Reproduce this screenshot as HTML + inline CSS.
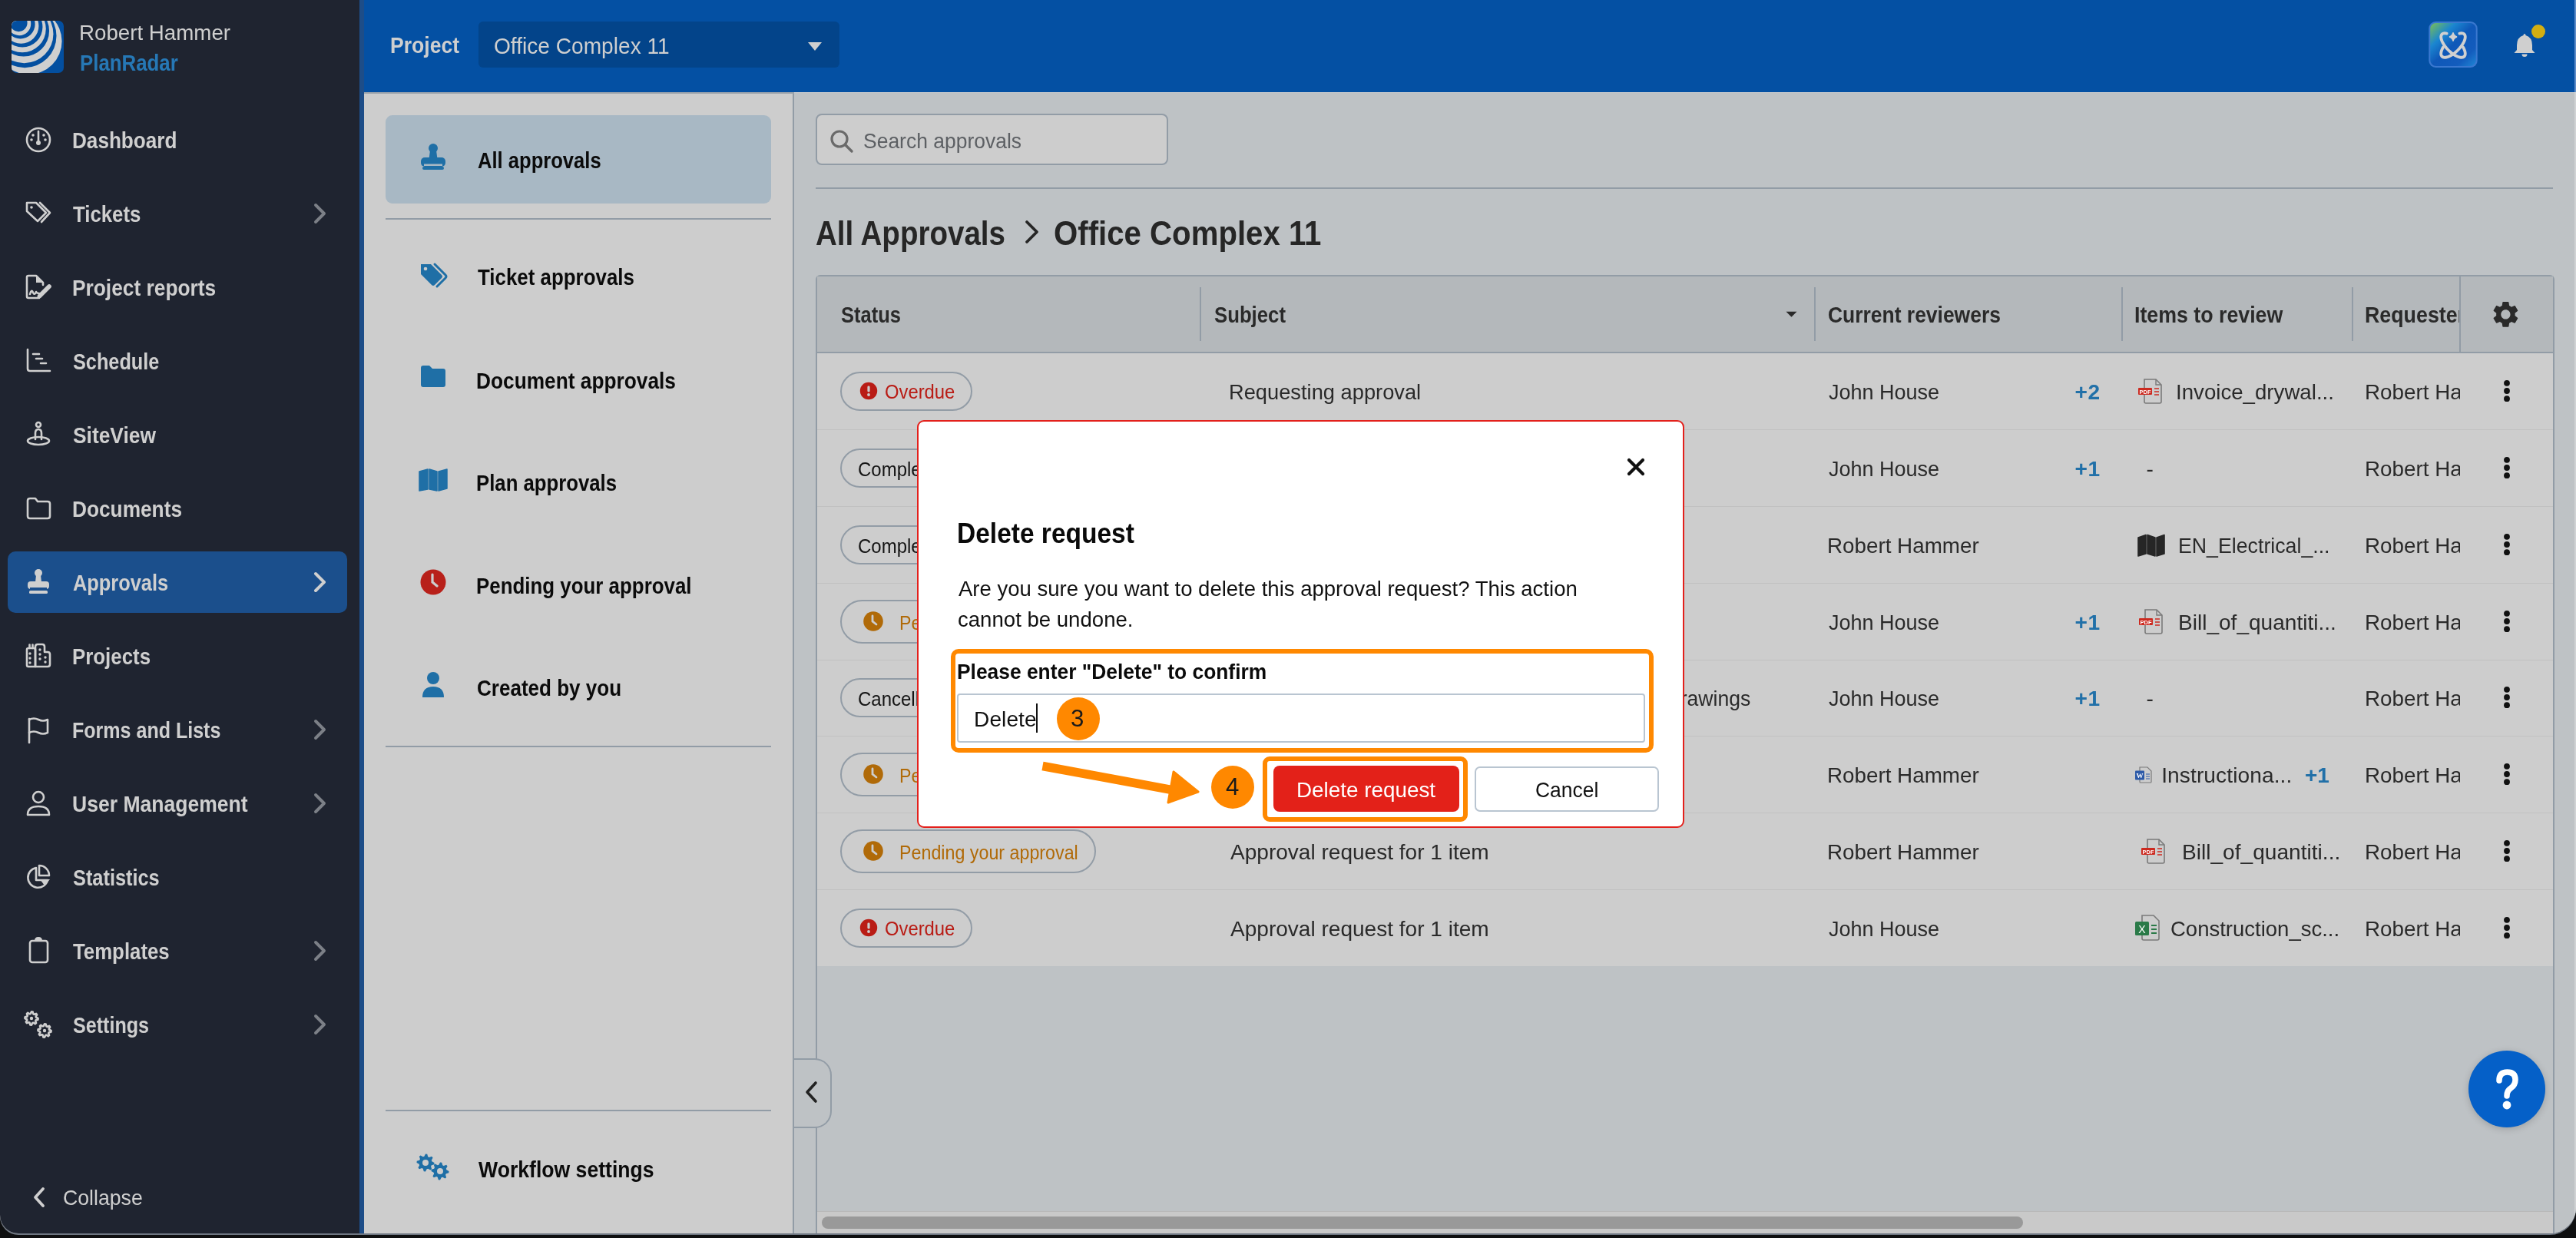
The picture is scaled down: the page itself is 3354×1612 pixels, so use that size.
<!DOCTYPE html>
<html><head><meta charset="utf-8"><title>PlanRadar - Approvals</title>
<style>
html,body{margin:0;padding:0;}
body{width:3354px;height:1612px;overflow:hidden;background:#0e0f10;font-family:"Liberation Sans", sans-serif;position:relative;}
svg{display:block;}
.w{will-change:transform;}
</style></head><body><div class="w" style="position:absolute;left:0;top:0;width:3354px;height:1612px;">
<div style="position:absolute;left:0;top:0;width:3354px;height:1606px;border-radius:0 0 34px 24px;overflow:hidden;background:#cdcdcd;box-shadow:0 2px 0 0 #6f7782">
<div style="position:absolute;left:0px;top:0px;width:468px;height:1607px;background:#1f2430;"></div>
<div style="position:absolute;left:468px;top:0px;width:6px;height:1607px;background:#1d4d88;"></div>
<div style="position:absolute;left:474px;top:0px;width:2880px;height:120px;background:#0450a3;"></div>
<div style="position:absolute;left:474px;top:120px;width:2880px;height:1px;background:#c9cbcd;"></div>
<div style="position:absolute;left:474px;top:121px;width:559px;height:1486px;background:#cdcdcd;"></div>
<div style="position:absolute;left:1032px;top:121px;width:2px;height:1486px;background:#929ca6;"></div>
<div style="position:absolute;left:474px;top:120px;width:560px;height:2px;background:#9aa3ab;"></div>
<div style="position:absolute;left:1034px;top:121px;width:2320px;height:1486px;background:#bec2c5;"></div>
<div style="position:absolute;left:3352px;top:120px;width:2px;height:1487px;background:#d0d2d4;"></div>
<div style="position:absolute;left:3352px;top:0px;width:2px;height:120px;background:#5f8cc8;"></div>
</div>
<svg style="position:absolute;left:15px;top:27px;" width="68" height="68" viewBox="0 0 68 68"><defs><clipPath id="lc"><rect x="0" y="0" width="68" height="68" rx="7"/></clipPath></defs><rect x="0" y="0" width="68" height="68" rx="7" fill="#034fa0"/><g clip-path="url(#lc)"><circle cx="22.39" cy="26.71" r="43.17" fill="#cfcfcf"/><circle cx="17.2" cy="19.87" r="41.29" fill="#034fa0"/><circle cx="16.51" cy="17.25" r="37.94" fill="#cfcfcf"/><circle cx="15.72" cy="13.23" r="33.32" fill="#034fa0"/><circle cx="14.01" cy="10.6" r="30.77" fill="#cfcfcf"/><circle cx="14.08" cy="8.09" r="26.39" fill="#034fa0"/><circle cx="12.43" cy="6.76" r="22.99" fill="#cfcfcf"/><circle cx="11.56" cy="4.44" r="19.07" fill="#034fa0"/><circle cx="10.07" cy="3.98" r="15.16" fill="#cfcfcf"/><circle cx="9.25" cy="2.87" r="11.32" fill="#034fa0"/></g></svg>
<div style="position:absolute;left:103.03px;top:28.90px;font-size:28.11px;line-height:28.11px;font-weight:400;color:#cfcfcf;white-space:nowrap;transform:scaleX(0.9854);transform-origin:0 0;">Robert Hammer</div>
<div style="position:absolute;left:104.11px;top:68.32px;font-size:29.15px;line-height:29.15px;font-weight:700;color:#2678b6;white-space:nowrap;transform:scaleX(0.8866);transform-origin:0 0;">PlanRadar</div>
<div style="position:absolute;left:10px;top:718px;width:442px;height:80px;background:#1b4f8c;border-radius:10px;"></div>
<div style="position:absolute;left:94.10px;top:169.32px;font-size:29.15px;line-height:29.15px;font-weight:700;color:#cfcfcf;white-space:nowrap;transform:scaleX(0.8962);transform-origin:0 0;">Dashboard</div>
<div style="position:absolute;left:95.00px;top:265.32px;font-size:29.15px;line-height:29.15px;font-weight:700;color:#cfcfcf;white-space:nowrap;transform:scaleX(0.8847);transform-origin:0 0;">Tickets</div>
<svg style="position:absolute;left:406px;top:264px;" width="22" height="28" viewBox="0 0 22 28"><path d="M5 3 L16 14 L5 25" fill="none" stroke="#7c8087" stroke-width="3.9" stroke-linecap="round" stroke-linejoin="round"/></svg>
<div style="position:absolute;left:94.10px;top:361.32px;font-size:29.15px;line-height:29.15px;font-weight:700;color:#cfcfcf;white-space:nowrap;transform:scaleX(0.9031);transform-origin:0 0;">Project reports</div>
<div style="position:absolute;left:95.00px;top:457.32px;font-size:29.15px;line-height:29.15px;font-weight:700;color:#cfcfcf;white-space:nowrap;transform:scaleX(0.8674);transform-origin:0 0;">Schedule</div>
<div style="position:absolute;left:95.00px;top:553.32px;font-size:29.15px;line-height:29.15px;font-weight:700;color:#cfcfcf;white-space:nowrap;transform:scaleX(0.9051);transform-origin:0 0;">SiteView</div>
<div style="position:absolute;left:94.10px;top:649.32px;font-size:29.15px;line-height:29.15px;font-weight:700;color:#cfcfcf;white-space:nowrap;transform:scaleX(0.9011);transform-origin:0 0;">Documents</div>
<div style="position:absolute;left:95.00px;top:745.32px;font-size:29.15px;line-height:29.15px;font-weight:700;color:#cfcfcf;white-space:nowrap;transform:scaleX(0.8707);transform-origin:0 0;">Approvals</div>
<svg style="position:absolute;left:406px;top:744px;" width="22" height="28" viewBox="0 0 22 28"><path d="M5 3 L16 14 L5 25" fill="none" stroke="#cfcfcf" stroke-width="3.9" stroke-linecap="round" stroke-linejoin="round"/></svg>
<div style="position:absolute;left:94.11px;top:841.32px;font-size:29.15px;line-height:29.15px;font-weight:700;color:#cfcfcf;white-space:nowrap;transform:scaleX(0.8876);transform-origin:0 0;">Projects</div>
<div style="position:absolute;left:94.14px;top:937.32px;font-size:29.15px;line-height:29.15px;font-weight:700;color:#cfcfcf;white-space:nowrap;transform:scaleX(0.8590);transform-origin:0 0;">Forms and Lists</div>
<svg style="position:absolute;left:406px;top:936px;" width="22" height="28" viewBox="0 0 22 28"><path d="M5 3 L16 14 L5 25" fill="none" stroke="#7c8087" stroke-width="3.9" stroke-linecap="round" stroke-linejoin="round"/></svg>
<div style="position:absolute;left:94.09px;top:1033.32px;font-size:29.15px;line-height:29.15px;font-weight:700;color:#cfcfcf;white-space:nowrap;transform:scaleX(0.9109);transform-origin:0 0;">User Management</div>
<svg style="position:absolute;left:406px;top:1032px;" width="22" height="28" viewBox="0 0 22 28"><path d="M5 3 L16 14 L5 25" fill="none" stroke="#7c8087" stroke-width="3.9" stroke-linecap="round" stroke-linejoin="round"/></svg>
<div style="position:absolute;left:95.00px;top:1129.32px;font-size:29.15px;line-height:29.15px;font-weight:700;color:#cfcfcf;white-space:nowrap;transform:scaleX(0.8697);transform-origin:0 0;">Statistics</div>
<div style="position:absolute;left:95.00px;top:1225.32px;font-size:29.15px;line-height:29.15px;font-weight:700;color:#cfcfcf;white-space:nowrap;transform:scaleX(0.8852);transform-origin:0 0;">Templates</div>
<svg style="position:absolute;left:406px;top:1224px;" width="22" height="28" viewBox="0 0 22 28"><path d="M5 3 L16 14 L5 25" fill="none" stroke="#7c8087" stroke-width="3.9" stroke-linecap="round" stroke-linejoin="round"/></svg>
<div style="position:absolute;left:95.00px;top:1321.32px;font-size:29.15px;line-height:29.15px;font-weight:700;color:#cfcfcf;white-space:nowrap;transform:scaleX(0.8619);transform-origin:0 0;">Settings</div>
<svg style="position:absolute;left:406px;top:1320px;" width="22" height="28" viewBox="0 0 22 28"><path d="M5 3 L16 14 L5 25" fill="none" stroke="#7c8087" stroke-width="3.9" stroke-linecap="round" stroke-linejoin="round"/></svg>
<svg style="position:absolute;left:30px;top:162px;" width="40" height="40" viewBox="0 0 40 40"><circle cx="20" cy="20" r="15" fill="none" stroke="#cfcfcf" stroke-width="2.6" stroke-linecap="round" stroke-linejoin="round"/><path d="M20 9 V22" fill="none" stroke="#cfcfcf" stroke-width="2.6" stroke-linecap="round" stroke-linejoin="round"/><circle cx="20" cy="24" r="3" fill="#cfcfcf"/><circle cx="13" cy="14" r="1.8" fill="#cfcfcf"/><circle cx="27" cy="14" r="1.8" fill="#cfcfcf"/><circle cx="11" cy="20" r="1.8" fill="#cfcfcf"/><circle cx="29" cy="20" r="1.8" fill="#cfcfcf"/></svg>
<svg style="position:absolute;left:30px;top:258px;" width="40" height="40" viewBox="0 0 40 40"><path d="M5 6 H17 L30 19 L19 30 L5 17 Z" fill="none" stroke="#cfcfcf" stroke-width="2.6" stroke-linecap="round" stroke-linejoin="round"/><circle cx="11" cy="12" r="1.8" fill="#cfcfcf"/><path d="M22 6 L35 19 L24 31" fill="none" stroke="#cfcfcf" stroke-width="2.6" stroke-linecap="round" stroke-linejoin="round"/></svg>
<svg style="position:absolute;left:30px;top:354px;" width="40" height="40" viewBox="0 0 40 40"><path d="M21 34 H7 Q5 34 5 32 V7 Q5 5 7 5 H17 L26 14 V17" fill="none" stroke="#cfcfcf" stroke-width="2.6" stroke-linecap="round" stroke-linejoin="round"/><path d="M17 4 V14 H27 Z" fill="#cfcfcf"/><path d="M9 29 Q11 22 13 27 Q15 31 17 26 Q18 28 21 28" fill="none" stroke="#cfcfcf" stroke-width="2.6" stroke-linecap="round" stroke-linejoin="round" stroke-width="1.8"/><path d="M19 30 L32 17 Q34 15 36 17 Q38 19 36 21 L23 34 L18 35 Z" fill="#cfcfcf"/></svg>
<svg style="position:absolute;left:30px;top:450px;" width="40" height="40" viewBox="0 0 40 40"><path d="M6 5 V30 Q6 33 9 33 H35" fill="none" stroke="#cfcfcf" stroke-width="2.6" stroke-linecap="round" stroke-linejoin="round"/><path d="M13 11 H21 M17 17 H25 M23 23 H30" fill="none" stroke="#cfcfcf" stroke-width="2.6" stroke-linecap="round" stroke-linejoin="round" stroke-width="3"/></svg>
<svg style="position:absolute;left:30px;top:546px;" width="40" height="40" viewBox="0 0 40 40"><circle cx="20" cy="7" r="3" fill="none" stroke="#cfcfcf" stroke-width="2.6" stroke-linecap="round" stroke-linejoin="round"/><path d="M16 26 V18 Q16 13 20 13 Q24 13 24 18 V26" fill="none" stroke="#cfcfcf" stroke-width="2.6" stroke-linecap="round" stroke-linejoin="round"/><ellipse cx="20" cy="28" rx="14" ry="5" fill="none" stroke="#cfcfcf" stroke-width="2.6" stroke-linecap="round" stroke-linejoin="round"/></svg>
<svg style="position:absolute;left:30px;top:642px;" width="40" height="40" viewBox="0 0 40 40"><path d="M6 10 Q6 7 9 7 H16 L19 11 H32 Q35 11 35 14 V30 Q35 33 32 33 H9 Q6 33 6 30 Z" fill="none" stroke="#cfcfcf" stroke-width="2.6" stroke-linecap="round" stroke-linejoin="round"/></svg>
<svg style="position:absolute;left:30px;top:738px;" width="40" height="40" viewBox="0 0 40 40"><circle cx="20" cy="8" r="5" fill="#cfcfcf"/><path d="M17 11 H23 L24 20 H16 Z" fill="#cfcfcf"/><rect x="6" y="19" width="28" height="10" rx="4" fill="#cfcfcf"/><rect x="8" y="31" width="24" height="4" rx="1.5" fill="#cfcfcf"/><rect x="9" y="27" width="22" height="2" fill="#1b4f8c"/></svg>
<svg style="position:absolute;left:30px;top:834px;" width="40" height="40" viewBox="0 0 40 40"><path d="M5 12 Q5 10 7 10 H14 Q16 10 16 12 V34 H7 Q5 34 5 32 Z" fill="none" stroke="#cfcfcf" stroke-width="2.6" stroke-linecap="round" stroke-linejoin="round"/><path d="M8.5 10 V5.5 M12.5 10 V5.5" fill="none" stroke="#cfcfcf" stroke-width="2.6" stroke-linecap="round" stroke-linejoin="round"/><path d="M16 34 V8 Q16 5 19 5 H25 Q28 5 28 8 V15 H32 Q35 15 35 18 V31 Q35 34 32 34 Z" fill="none" stroke="#cfcfcf" stroke-width="2.6" stroke-linecap="round" stroke-linejoin="round"/><g fill="#cfcfcf"><circle cx="9" cy="17" r="1.7"/><circle cx="9" cy="23" r="1.7"/><circle cx="9" cy="29" r="1.7"/><circle cx="22" cy="12" r="1.7"/><circle cx="22" cy="18" r="1.7"/><circle cx="22" cy="24" r="1.7"/><circle cx="29" cy="22" r="1.7"/><circle cx="29" cy="28" r="1.7"/></g></svg>
<svg style="position:absolute;left:30px;top:930px;" width="40" height="40" viewBox="0 0 40 40"><path d="M8 37 V6" fill="none" stroke="#cfcfcf" stroke-width="2.6" stroke-linecap="round" stroke-linejoin="round"/><path d="M8 7 Q14 4 20 7 Q26 10 32 7 V24 Q26 27 20 24 Q14 21 8 24" fill="none" stroke="#cfcfcf" stroke-width="2.6" stroke-linecap="round" stroke-linejoin="round"/></svg>
<svg style="position:absolute;left:30px;top:1026px;" width="40" height="40" viewBox="0 0 40 40"><circle cx="20" cy="12" r="7" fill="none" stroke="#cfcfcf" stroke-width="2.6" stroke-linecap="round" stroke-linejoin="round"/><path d="M6 35 Q6 24 20 24 Q34 24 34 35 Z" fill="none" stroke="#cfcfcf" stroke-width="2.6" stroke-linecap="round" stroke-linejoin="round"/></svg>
<svg style="position:absolute;left:30px;top:1122px;" width="40" height="40" viewBox="0 0 40 40"><path d="M17 8 A13 13 0 1 0 32 24 L17 24 Z" fill="none" stroke="#cfcfcf" stroke-width="2.6" stroke-linecap="round" stroke-linejoin="round"/><path d="M21 5 A13 13 0 0 1 34 18 H21 Z" fill="none" stroke="#cfcfcf" stroke-width="2.6" stroke-linecap="round" stroke-linejoin="round"/><path d="M22 23 H35 L28 31 Z" fill="#cfcfcf"/></svg>
<svg style="position:absolute;left:30px;top:1218px;" width="40" height="40" viewBox="0 0 40 40"><rect x="9" y="7" width="23" height="28" rx="3" fill="none" stroke="#cfcfcf" stroke-width="2.6" stroke-linecap="round" stroke-linejoin="round"/><path d="M16 7 Q16 3 20 3 Q24 3 24 7" fill="#cfcfcf" stroke="#cfcfcf" stroke-width="2"/></svg>
<svg style="position:absolute;left:30px;top:1314px;" width="40" height="40" viewBox="0 0 40 40"><path d="M19.60,12.00 L19.43,13.68 L16.73,14.37 L16.16,15.44 L17.08,18.08 L15.78,19.15 L13.37,17.73 L12.21,18.08 L11.00,20.60 L9.32,20.43 L8.63,17.73 L7.56,17.16 L4.92,18.08 L3.85,16.78 L5.27,14.37 L4.92,13.21 L2.40,12.00 L2.57,10.32 L5.27,9.63 L5.84,8.56 L4.92,5.92 L6.22,4.85 L8.63,6.27 L9.79,5.92 L11.00,3.40 L12.68,3.57 L13.37,6.27 L14.44,6.84 L17.08,5.92 L18.15,7.22 L16.73,9.63 L17.08,10.79 Z" fill="none" stroke="#cfcfcf" stroke-width="2.6" stroke-linecap="round" stroke-linejoin="round" stroke-width="2.1"/><circle cx="11" cy="12" r="2.2" fill="#cfcfcf"/><path d="M36.60,28.00 L36.43,29.68 L33.73,30.37 L33.16,31.44 L34.08,34.08 L32.78,35.15 L30.37,33.73 L29.21,34.08 L28.00,36.60 L26.32,36.43 L25.63,33.73 L24.56,33.16 L21.92,34.08 L20.85,32.78 L22.27,30.37 L21.92,29.21 L19.40,28.00 L19.57,26.32 L22.27,25.63 L22.84,24.56 L21.92,21.92 L23.22,20.85 L25.63,22.27 L26.79,21.92 L28.00,19.40 L29.68,19.57 L30.37,22.27 L31.44,22.84 L34.08,21.92 L35.15,23.22 L33.73,25.63 L34.08,26.79 Z" fill="none" stroke="#cfcfcf" stroke-width="2.6" stroke-linecap="round" stroke-linejoin="round" stroke-width="2.1"/><circle cx="28" cy="28" r="2.2" fill="#cfcfcf"/></svg>
<svg style="position:absolute;left:38px;top:1544px;" width="24" height="30" viewBox="0 0 24 30"><path d="M18 4 L8 15 L18 26" fill="none" stroke="#cfcfcf" stroke-width="3.8" stroke-linecap="round" stroke-linejoin="round"/></svg>
<div style="position:absolute;left:82.05px;top:1546.20px;font-size:28.11px;line-height:28.11px;font-weight:400;color:#cfcfcf;white-space:nowrap;transform:scaleX(0.9485);transform-origin:0 0;">Collapse</div>
<div style="position:absolute;left:507.54px;top:44.44px;font-size:30.19px;line-height:30.19px;font-weight:700;color:#cfcfcf;white-space:nowrap;transform:scaleX(0.8795);transform-origin:0 0;">Project</div>
<div style="position:absolute;left:623px;top:28px;width:470px;height:60px;background:#03448a;border-radius:6px;"></div>
<div style="position:absolute;left:643.02px;top:45.56px;font-size:28.63px;line-height:28.63px;font-weight:400;color:#cfcfcf;white-space:nowrap;transform:scaleX(0.9823);transform-origin:0 0;">Office Complex 11</div>
<svg style="position:absolute;left:1050px;top:54px;" width="22" height="14" viewBox="0 0 22 14"><path d="M2 1 H20 L11 12 Z" fill="#cfcfcf"/></svg>
<svg style="position:absolute;left:3162px;top:28px;" width="64" height="60" viewBox="0 0 64 60"><defs><linearGradient id="aig" x1="0" y1="0" x2="1" y2="1">
<stop offset="0" stop-color="#7abf55"/><stop offset="0.28" stop-color="#1b86d0"/><stop offset="0.5" stop-color="#0f58b8"/><stop offset="0.78" stop-color="#135cbd"/><stop offset="1" stop-color="#1f86d4"/></linearGradient></defs>
<rect x="0.3" y="0" width="63.4" height="60" rx="9" fill="#3a78d0"/>
<rect x="2.3" y="2" width="59.4" height="56" rx="7.5" fill="url(#aig)"/>
<g fill="none" stroke="#d0d0d0" stroke-width="3.8" stroke-linecap="round">
<path d="M44.96,33.40 L45.79,34.94 L46.48,36.43 L47.03,37.87 L47.43,39.25 L47.68,40.54 L47.77,41.74 L47.71,42.83 L47.50,43.81 L47.13,44.66 L46.62,45.37 L45.95,45.94 L45.16,46.37 L44.23,46.65 L43.18,46.77 L42.02,46.73 L40.77,46.55 L39.43,46.20 L38.01,45.71 L36.53,45.08 L35.01,44.30 L33.47,43.40 L31.90,42.37 L30.34,41.23 L28.79,39.99 L27.28,38.66 L25.81,37.25 L24.40,35.79 L23.07,34.28 L21.82,32.73 L20.68,31.17 L19.65,29.60 L18.74,28.05 L17.95,26.53 L17.31,25.05 L16.81,23.64 L16.47,22.29 L16.27,21.03 L16.23,19.87 L16.34,18.81 L16.61,17.88 L17.03,17.08 L17.60,16.41 L18.31,15.89 L19.15,15.51 L20.13,15.29 L21.21,15.23 L22.41,15.31 L23.69,15.56"/><path d="M40.31,15.56 L41.59,15.31 L42.79,15.23 L43.87,15.29 L44.85,15.51 L45.69,15.89 L46.40,16.41 L46.97,17.08 L47.39,17.88 L47.66,18.81 L47.77,19.87 L47.73,21.03 L47.53,22.29 L47.19,23.64 L46.69,25.05 L46.05,26.53 L45.26,28.05 L44.35,29.60 L43.32,31.17 L42.18,32.73 L40.93,34.28 L39.60,35.79 L38.19,37.25 L36.72,38.66 L35.21,39.99 L33.66,41.23 L32.10,42.37 L30.53,43.40 L28.99,44.30 L27.47,45.08 L25.99,45.71 L24.57,46.20 L23.23,46.55 L21.98,46.73 L20.82,46.77 L19.77,46.65 L18.84,46.37 L18.05,45.94 L17.38,45.37 L16.87,44.66 L16.50,43.81 L16.29,42.83 L16.23,41.74 L16.32,40.54 L16.57,39.25 L16.97,37.87 L17.52,36.43 L18.21,34.94 L19.04,33.40"/></g>
<path d="M32 14.5 Q33 19 37 20 Q33 21 32 25.5 Q31 21 27 20 Q31 19 32 14.5 Z" fill="#d0d0d0" stroke="#d0d0d0" stroke-width="1.5"/></svg>
<svg style="position:absolute;left:3262px;top:28px;" width="56" height="52" viewBox="0 0 56 52"><path d="M25 16 Q26.5 16 26.5 18 Q35 20.5 35 31 V37 L38.5 41 H11.5 L15 37 V31 Q15 20.5 23.5 18 Q23.5 16 25 16 Z" fill="#cfcfcf"/><path d="M21.5 42.5 H28.5 Q28.5 46 25 46 Q21.5 46 21.5 42.5 Z" fill="#cfcfcf"/><circle cx="43" cy="13" r="9" fill="#d2ae12"/></svg>
<div style="position:absolute;left:502px;top:150px;width:502px;height:115px;background:#a8b8c4;border-radius:9px;"></div>
<div style="position:absolute;left:502px;top:284px;width:502px;height:2px;background:#929ca6;"></div>
<div style="position:absolute;left:502px;top:971px;width:502px;height:2px;background:#929ca6;"></div>
<div style="position:absolute;left:502px;top:1445px;width:502px;height:2px;background:#929ca6;"></div>
<div style="position:absolute;left:622.00px;top:193.94px;font-size:30.19px;line-height:30.19px;font-weight:700;color:#0b0b0b;white-space:nowrap;transform:scaleX(0.8475);transform-origin:0 0;">All approvals</div>
<div style="position:absolute;left:622.00px;top:346.44px;font-size:30.19px;line-height:30.19px;font-weight:700;color:#0b0b0b;white-space:nowrap;transform:scaleX(0.8577);transform-origin:0 0;">Ticket approvals</div>
<div style="position:absolute;left:620.26px;top:480.94px;font-size:30.19px;line-height:30.19px;font-weight:700;color:#0b0b0b;white-space:nowrap;transform:scaleX(0.8705);transform-origin:0 0;">Document approvals</div>
<div style="position:absolute;left:620.29px;top:614.44px;font-size:30.19px;line-height:30.19px;font-weight:700;color:#0b0b0b;white-space:nowrap;transform:scaleX(0.8525);transform-origin:0 0;">Plan approvals</div>
<div style="position:absolute;left:620.28px;top:748.14px;font-size:30.19px;line-height:30.19px;font-weight:700;color:#0b0b0b;white-space:nowrap;transform:scaleX(0.8576);transform-origin:0 0;">Pending your approval</div>
<div style="position:absolute;left:621.14px;top:881.14px;font-size:30.19px;line-height:30.19px;font-weight:700;color:#0b0b0b;white-space:nowrap;transform:scaleX(0.8626);transform-origin:0 0;">Created by you</div>
<div style="position:absolute;left:622.50px;top:1508.44px;font-size:30.19px;line-height:30.19px;font-weight:700;color:#0b0b0b;white-space:nowrap;transform:scaleX(0.8812);transform-origin:0 0;">Workflow settings</div>
<svg style="position:absolute;left:546px;top:186px;" width="36" height="38" viewBox="0 0 36 38"><circle cx="18" cy="7" r="6" fill="#1f6fa6"/><path d="M14 10 H22 L23.5 21 H12.5 Z" fill="#1f6fa6"/><rect x="2" y="19" width="32" height="12" rx="5" fill="#1f6fa6"/><rect x="4" y="31" width="28" height="4" rx="2" fill="#1f6fa6"/><rect x="6" y="27.5" width="24" height="2.5" fill="#a8b8c4"/></svg>
<svg style="position:absolute;left:544px;top:340px;" width="40" height="40" viewBox="0 0 40 40"><path d="M4 4 H17 L31 18 Q33 20 31 22 L22 31 Q20 33 18 31 L4 17 Z" fill="#1f6fa6"/><circle cx="10" cy="10" r="2.3" fill="#cdcdcd"/><path d="M22 4 L36 18 Q38 20 36 22 L25 33" fill="none" stroke="#1f6fa6" stroke-width="3" stroke-linecap="round"/></svg>
<svg style="position:absolute;left:546px;top:474px;" width="36" height="32" viewBox="0 0 36 32"><path d="M2 5 Q2 2 5 2 H13 L17 6 H31 Q34 6 34 9 V27 Q34 30 31 30 H5 Q2 30 2 27 Z" fill="#1f6fa6"/></svg>
<svg style="position:absolute;left:544px;top:609px;" width="40" height="32" viewBox="0 0 40 32"><path d="M2 5 L13 2 V28 L2 30 Z M15 2 L25 5 V30 L15 28 Z M27 5 L38 2 V27 L27 30 Z" fill="#1f6fa6" stroke="#1f6fa6" stroke-width="1.5" stroke-linejoin="round"/></svg>
<svg style="position:absolute;left:546px;top:740px;" width="36" height="36" viewBox="0 0 36 36"><circle cx="18" cy="18" r="16.5" fill="#b8201a"/><path d="M17 8 V18 L23 23" fill="none" stroke="#cdcdcd" stroke-width="3.2" stroke-linecap="round"/></svg>
<svg style="position:absolute;left:548px;top:874px;" width="32" height="36" viewBox="0 0 32 36"><circle cx="16" cy="9" r="8" fill="#1f6fa6"/><path d="M2 34 Q2 20 16 20 Q30 20 30 34 Z" fill="#1f6fa6"/></svg>
<svg style="position:absolute;left:540px;top:1500px;" width="46" height="40" viewBox="0 0 46 40"><path d="M25.50,14.00 L25.28,16.24 L21.85,17.25 L21.07,18.72 L22.13,22.13 L20.39,23.56 L17.25,21.85 L15.66,22.34 L14.00,25.50 L11.76,25.28 L10.75,21.85 L9.28,21.07 L5.87,22.13 L4.44,20.39 L6.15,17.25 L5.66,15.66 L2.50,14.00 L2.72,11.76 L6.15,10.75 L6.93,9.28 L5.87,5.87 L7.61,4.44 L10.75,6.15 L12.34,5.66 L14.00,2.50 L16.24,2.72 L17.25,6.15 L18.72,6.93 L22.13,5.87 L23.56,7.61 L21.85,10.75 L22.34,12.34 Z" fill="#1f6fa6"/><circle cx="14" cy="14" r="4" fill="#cdcdcd"/><path d="M44.50,25.00 L44.28,27.24 L40.85,28.25 L40.07,29.72 L41.13,33.13 L39.39,34.56 L36.25,32.85 L34.66,33.34 L33.00,36.50 L30.76,36.28 L29.75,32.85 L28.28,32.07 L24.87,33.13 L23.44,31.39 L25.15,28.25 L24.66,26.66 L21.50,25.00 L21.72,22.76 L25.15,21.75 L25.93,20.28 L24.87,16.87 L26.61,15.44 L29.75,17.15 L31.34,16.66 L33.00,13.50 L35.24,13.72 L36.25,17.15 L37.72,17.93 L41.13,16.87 L42.56,18.61 L40.85,21.75 L41.34,23.34 Z" fill="#1f6fa6"/><circle cx="33" cy="25" r="4" fill="#cdcdcd"/></svg>
<div style="position:absolute;left:1062px;top:148px;width:455px;height:63px;background:#cdcdcd;border:2px solid #929ca6;border-radius:8px;"></div>
<svg style="position:absolute;left:1078px;top:166px;" width="36" height="36" viewBox="0 0 36 36"><circle cx="15" cy="15" r="10" fill="none" stroke="#6a6a6a" stroke-width="3.2"/><path d="M22.5 22.5 L31 31" stroke="#6a6a6a" stroke-width="3.4" stroke-linecap="round"/></svg>
<div style="position:absolute;left:1124.06px;top:170.00px;font-size:28.11px;line-height:28.11px;font-weight:400;color:#5d6064;white-space:nowrap;transform:scaleX(0.9417);transform-origin:0 0;">Search approvals</div>
<div style="position:absolute;left:1062px;top:244px;width:2262px;height:2px;background:#929ca6;"></div>
<div style="position:absolute;left:1061.73px;top:282.45px;font-size:44.24px;line-height:44.24px;font-weight:700;color:#262626;white-space:nowrap;transform:scaleX(0.8711);transform-origin:0 0;">All Approvals</div>
<svg style="position:absolute;left:1330px;top:284px;" width="28" height="36" viewBox="0 0 28 36"><path d="M7 5 L20 18 L7 31" fill="none" stroke="#262626" stroke-width="3.8" stroke-linecap="round" stroke-linejoin="round"/></svg>
<div style="position:absolute;left:1372.39px;top:282.45px;font-size:44.24px;line-height:44.24px;font-weight:700;color:#262626;white-space:nowrap;transform:scaleX(0.9086);transform-origin:0 0;">Office Complex 11</div>
<div style="position:absolute;left:1062px;top:358px;width:2260px;height:1246px;border:2px solid #929ca6;border-bottom:none;border-radius:6px 6px 0 0;background:#bec2c5;"></div>
<div style="position:absolute;left:1064px;top:360px;width:2260px;height:98px;background:#b4b8bb;"></div>
<div style="position:absolute;left:1064px;top:458px;width:2260px;height:2px;background:#929ca6;"></div>
<div style="position:absolute;left:1064px;top:460px;width:2260px;height:798px;background:#cdcdcd;"></div>
<div style="position:absolute;left:1064px;top:559px;width:2260px;height:1px;background:#c1c1c1;"></div>
<div style="position:absolute;left:1064px;top:659px;width:2260px;height:1px;background:#c1c1c1;"></div>
<div style="position:absolute;left:1064px;top:759px;width:2260px;height:1px;background:#c1c1c1;"></div>
<div style="position:absolute;left:1064px;top:859px;width:2260px;height:1px;background:#c1c1c1;"></div>
<div style="position:absolute;left:1064px;top:958px;width:2260px;height:1px;background:#c1c1c1;"></div>
<div style="position:absolute;left:1064px;top:1058px;width:2260px;height:1px;background:#c1c1c1;"></div>
<div style="position:absolute;left:1064px;top:1158px;width:2260px;height:1px;background:#c1c1c1;"></div>
<div style="position:absolute;left:1562px;top:374px;width:2px;height:70px;background:#929ca6;"></div>
<div style="position:absolute;left:2362px;top:374px;width:2px;height:70px;background:#929ca6;"></div>
<div style="position:absolute;left:2762px;top:374px;width:2px;height:70px;background:#929ca6;"></div>
<div style="position:absolute;left:3062px;top:374px;width:2px;height:70px;background:#929ca6;"></div>
<div style="position:absolute;left:3202px;top:360px;width:2px;height:98px;background:#929ca6;"></div>
<div style="position:absolute;left:1094.60px;top:395.44px;font-size:30.19px;line-height:30.19px;font-weight:700;color:#2a2a2a;white-space:nowrap;transform:scaleX(0.8451);transform-origin:0 0;">Status</div>
<div style="position:absolute;left:1580.60px;top:395.44px;font-size:30.19px;line-height:30.19px;font-weight:700;color:#2a2a2a;white-space:nowrap;transform:scaleX(0.8525);transform-origin:0 0;">Subject</div>
<svg style="position:absolute;left:2322px;top:402px;" width="22" height="14" viewBox="0 0 22 14"><path d="M3.5 3.8 H17.5 L10.5 10.8 Z" fill="#2a2a2a"/></svg>
<div style="position:absolute;left:2379.82px;top:395.44px;font-size:30.19px;line-height:30.19px;font-weight:700;color:#2a2a2a;white-space:nowrap;transform:scaleX(0.8760);transform-origin:0 0;">Current reviewers</div>
<div style="position:absolute;left:2779.23px;top:395.44px;font-size:30.19px;line-height:30.19px;font-weight:700;color:#2a2a2a;white-space:nowrap;transform:scaleX(0.8863);transform-origin:0 0;">Items to review</div>
<div style="position:absolute;left:3062px;top:380px;width:140px;height:60px;overflow:hidden;">
<div style="position:absolute;left:17.22px;top:15.44px;font-size:30.19px;line-height:30.19px;font-weight:700;color:#2a2a2a;white-space:nowrap;transform:scaleX(0.8876);transform-origin:0 0;">Requester</div>
</div>
<svg style="position:absolute;left:3241.6px;top:389.4px;" width="40.8" height="40.8" viewBox="0 0 24 24"><path d="M19.14 12.94c.04-.3.06-.61.06-.94 0-.32-.02-.64-.07-.94l2.03-1.58c.18-.14.23-.41.12-.61l-1.92-3.32c-.12-.22-.37-.29-.59-.22l-2.39.96c-.5-.38-1.03-.7-1.62-.94l-.36-2.54c-.04-.24-.24-.41-.48-.41h-3.84c-.24 0-.43.17-.47.41l-.36 2.54c-.59.24-1.13.57-1.62.94l-2.39-.96c-.22-.08-.47 0-.59.22L2.74 8.87c-.12.21-.08.47.12.61l2.03 1.58c-.05.3-.09.63-.09.94s.02.64.07.94l-2.03 1.58c-.18.14-.23.41-.12.61l1.92 3.320c.12.22.37.29.59.22l2.39-.96c.5.38 1.03.7 1.62.94l.36 2.54c.05.24.24.41.48.41h3.84c.24 0 .44-.17.47-.41l.36-2.54c.59-.24 1.13-.56 1.62-.94l2.39.96c.22.08.47 0 .59-.22l1.92-3.32c.12-.22.07-.47-.12-.61l-2.01-1.58zM12 15.6c-1.98 0-3.6-1.62-3.6-3.6s1.62-3.6 3.6-3.6 3.6 1.62 3.6 3.6-1.62 3.6-3.6 3.6z" fill="#2a2a2a" fill-rule="evenodd"/></svg>
<div style="position:absolute;left:1064px;top:1577px;width:2260px;height:1px;background:#b9b9b9;"></div>
<div style="position:absolute;left:1064px;top:1578px;width:2260px;height:28px;background:#c9c9c9;"></div>
<div style="position:absolute;left:1070px;top:1584px;width:1564px;height:16px;background:#999999;border-radius:8px;"></div>
<div style="position:absolute;left:1032px;top:1378px;width:49px;height:87px;background:#bec2c5;border:2px solid #929ca6;border-left:none;border-radius:0 22px 22px 0;"></div>
<svg style="position:absolute;left:1044px;top:1406px;" width="24" height="34" viewBox="0 0 24 34"><path d="M18 4 L7 16 L18 28" fill="none" stroke="#222" stroke-width="3.6" stroke-linecap="round" stroke-linejoin="round"/></svg>
<div style="position:absolute;left:1032px;top:1378px;width:2px;height:89px;background:#929ca6;"></div>
<div style="position:absolute;left:3214px;top:1368px;width:100px;height:100px;border-radius:50%;background:#0560c8;box-shadow:0 2px 10px rgba(0,0,0,0.18);"></div>
<svg style="position:absolute;left:3234px;top:1386px;" width="60" height="64" viewBox="0 0 60 64"><path d="M20 21 Q20 10 30.5 10 Q41 10 41 20 Q41 27 35 31 Q30 34 30 41" fill="none" stroke="#fff" stroke-width="7.5" stroke-linecap="round"/><circle cx="30" cy="53" r="5.4" fill="#fff"/></svg>
<div style="position:absolute;left:1094px;top:483.5px;width:168px;height:47px;border:2px solid #929ca6;border-radius:25.5px;"></div>
<svg style="position:absolute;left:1119px;top:497px;" width="24" height="24" viewBox="0 0 24 24"><circle cx="12" cy="12" r="11.2" fill="#b91c15"/><rect x="10.4" y="5.5" width="3.2" height="8" rx="1.4" fill="#cdcdcd"/><circle cx="12" cy="17" r="1.9" fill="#cdcdcd"/></svg>
<div style="position:absolute;left:1152.08px;top:497.47px;font-size:26.02px;line-height:26.02px;font-weight:400;color:#b91c15;white-space:nowrap;transform:scaleX(0.9154);transform-origin:0 0;">Overdue</div>
<div style="position:absolute;left:1094px;top:583.5px;width:166px;height:47px;border:2px solid #929ca6;border-radius:25.5px;"></div>
<div style="position:absolute;left:1116.58px;top:597.97px;font-size:26.02px;line-height:26.02px;font-weight:400;color:#141414;white-space:nowrap;transform:scaleX(0.9222);transform-origin:0 0;">Completed</div>
<div style="position:absolute;left:1094px;top:683.5px;width:166px;height:47px;border:2px solid #929ca6;border-radius:25.5px;"></div>
<div style="position:absolute;left:1116.58px;top:697.97px;font-size:26.02px;line-height:26.02px;font-weight:400;color:#141414;white-space:nowrap;transform:scaleX(0.9222);transform-origin:0 0;">Completed</div>
<div style="position:absolute;left:1094px;top:780.5px;width:329px;height:53px;border:2px solid #929ca6;border-radius:28.5px;"></div>
<svg style="position:absolute;left:1123px;top:795px;" width="28" height="28" viewBox="0 0 28 28"><circle cx="14" cy="14" r="12.8" fill="#b06a08"/><path d="M13 7 V14 L18 18" fill="none" stroke="#cdcdcd" stroke-width="2.8" stroke-linecap="round"/></svg>
<div style="position:absolute;left:1170.91px;top:797.97px;font-size:26.02px;line-height:26.02px;font-weight:400;color:#b06a08;white-space:nowrap;transform:scaleX(0.8942);transform-origin:0 0;">Pending your approval</div>
<div style="position:absolute;left:1094px;top:882.5px;width:166px;height:47px;border:2px solid #929ca6;border-radius:25.5px;"></div>
<div style="position:absolute;left:1116.58px;top:896.97px;font-size:26.02px;line-height:26.02px;font-weight:400;color:#141414;white-space:nowrap;transform:scaleX(0.9222);transform-origin:0 0;">Cancelled</div>
<div style="position:absolute;left:1094px;top:979.5px;width:329px;height:53px;border:2px solid #929ca6;border-radius:28.5px;"></div>
<svg style="position:absolute;left:1123px;top:994px;" width="28" height="28" viewBox="0 0 28 28"><circle cx="14" cy="14" r="12.8" fill="#b06a08"/><path d="M13 7 V14 L18 18" fill="none" stroke="#cdcdcd" stroke-width="2.8" stroke-linecap="round"/></svg>
<div style="position:absolute;left:1170.91px;top:996.97px;font-size:26.02px;line-height:26.02px;font-weight:400;color:#b06a08;white-space:nowrap;transform:scaleX(0.8942);transform-origin:0 0;">Pending your approval</div>
<div style="position:absolute;left:1094px;top:1079.5px;width:329px;height:53px;border:2px solid #929ca6;border-radius:28.5px;"></div>
<svg style="position:absolute;left:1123px;top:1094px;" width="28" height="28" viewBox="0 0 28 28"><circle cx="14" cy="14" r="12.8" fill="#b06a08"/><path d="M13 7 V14 L18 18" fill="none" stroke="#cdcdcd" stroke-width="2.8" stroke-linecap="round"/></svg>
<div style="position:absolute;left:1170.91px;top:1096.97px;font-size:26.02px;line-height:26.02px;font-weight:400;color:#b06a08;white-space:nowrap;transform:scaleX(0.8942);transform-origin:0 0;">Pending your approval</div>
<div style="position:absolute;left:1094px;top:1182.5px;width:168px;height:47px;border:2px solid #929ca6;border-radius:25.5px;"></div>
<svg style="position:absolute;left:1119px;top:1196px;" width="24" height="24" viewBox="0 0 24 24"><circle cx="12" cy="12" r="11.2" fill="#b91c15"/><rect x="10.4" y="5.5" width="3.2" height="8" rx="1.4" fill="#cdcdcd"/><circle cx="12" cy="17" r="1.9" fill="#cdcdcd"/></svg>
<div style="position:absolute;left:1152.08px;top:1196.47px;font-size:26.02px;line-height:26.02px;font-weight:400;color:#b91c15;white-space:nowrap;transform:scaleX(0.9154);transform-origin:0 0;">Overdue</div>
<div style="position:absolute;left:1599.76px;top:496.50px;font-size:28.11px;line-height:28.11px;font-weight:400;color:#2a2a2a;white-space:nowrap;transform:scaleX(0.9702);transform-origin:0 0;">Requesting approval</div>
<div style="position:absolute;left:1601.70px;top:596.50px;font-size:28.11px;line-height:28.11px;font-weight:400;color:#2a2a2a;white-space:nowrap;transform:scaleX(0.9977);transform-origin:0 0;">Approval request for 1 item</div>
<div style="position:absolute;left:1601.70px;top:696.50px;font-size:28.11px;line-height:28.11px;font-weight:400;color:#2a2a2a;white-space:nowrap;transform:scaleX(0.9977);transform-origin:0 0;">Approval request for 1 item</div>
<div style="position:absolute;left:1601.70px;top:796.50px;font-size:28.11px;line-height:28.11px;font-weight:400;color:#2a2a2a;white-space:nowrap;transform:scaleX(0.9977);transform-origin:0 0;">Approval request for 1 item</div>
<div style="position:absolute;left:1926.22px;top:895.50px;font-size:28.11px;line-height:28.11px;font-weight:400;color:#2a2a2a;white-space:nowrap;transform:scaleX(0.9462);transform-origin:0 0;">Approval request for drawings</div>
<div style="position:absolute;left:1601.70px;top:995.50px;font-size:28.11px;line-height:28.11px;font-weight:400;color:#2a2a2a;white-space:nowrap;transform:scaleX(0.9977);transform-origin:0 0;">Approval request for 1 item</div>
<div style="position:absolute;left:1601.70px;top:1095.50px;font-size:28.11px;line-height:28.11px;font-weight:400;color:#2a2a2a;white-space:nowrap;transform:scaleX(0.9977);transform-origin:0 0;">Approval request for 1 item</div>
<div style="position:absolute;left:1601.70px;top:1195.50px;font-size:28.11px;line-height:28.11px;font-weight:400;color:#2a2a2a;white-space:nowrap;transform:scaleX(0.9977);transform-origin:0 0;">Approval request for 1 item</div>
<div style="position:absolute;left:2380.50px;top:496.50px;font-size:28.11px;line-height:28.11px;font-weight:400;color:#2a2a2a;white-space:nowrap;transform:scaleX(0.9606);transform-origin:0 0;">John House</div>
<div style="position:absolute;left:2701.50px;top:496.50px;font-size:28.11px;line-height:28.11px;font-weight:700;color:#2170a8;white-space:nowrap;letter-spacing:0.585px;">+2</div>
<div style="position:absolute;left:2380.50px;top:596.50px;font-size:28.11px;line-height:28.11px;font-weight:400;color:#2a2a2a;white-space:nowrap;transform:scaleX(0.9606);transform-origin:0 0;">John House</div>
<div style="position:absolute;left:2701.50px;top:596.50px;font-size:28.11px;line-height:28.11px;font-weight:700;color:#2170a8;white-space:nowrap;letter-spacing:0.585px;">+1</div>
<div style="position:absolute;left:2378.52px;top:696.50px;font-size:28.11px;line-height:28.11px;font-weight:400;color:#2a2a2a;white-space:nowrap;transform:scaleX(0.9885);transform-origin:0 0;">Robert Hammer</div>
<div style="position:absolute;left:2380.50px;top:796.50px;font-size:28.11px;line-height:28.11px;font-weight:400;color:#2a2a2a;white-space:nowrap;transform:scaleX(0.9606);transform-origin:0 0;">John House</div>
<div style="position:absolute;left:2701.50px;top:796.50px;font-size:28.11px;line-height:28.11px;font-weight:700;color:#2170a8;white-space:nowrap;letter-spacing:0.585px;">+1</div>
<div style="position:absolute;left:2380.50px;top:895.50px;font-size:28.11px;line-height:28.11px;font-weight:400;color:#2a2a2a;white-space:nowrap;transform:scaleX(0.9606);transform-origin:0 0;">John House</div>
<div style="position:absolute;left:2701.50px;top:895.50px;font-size:28.11px;line-height:28.11px;font-weight:700;color:#2170a8;white-space:nowrap;letter-spacing:0.585px;">+1</div>
<div style="position:absolute;left:2378.52px;top:995.50px;font-size:28.11px;line-height:28.11px;font-weight:400;color:#2a2a2a;white-space:nowrap;transform:scaleX(0.9885);transform-origin:0 0;">Robert Hammer</div>
<div style="position:absolute;left:2378.52px;top:1095.50px;font-size:28.11px;line-height:28.11px;font-weight:400;color:#2a2a2a;white-space:nowrap;transform:scaleX(0.9885);transform-origin:0 0;">Robert Hammer</div>
<div style="position:absolute;left:2380.50px;top:1195.50px;font-size:28.11px;line-height:28.11px;font-weight:400;color:#2a2a2a;white-space:nowrap;transform:scaleX(0.9606);transform-origin:0 0;">John House</div>
<svg style="position:absolute;left:2783px;top:492px;" width="34" height="34" viewBox="0 0 34 34"><path d="M9 2 H24 L31 9 V31 Q31 33 29 33 H11 Q9 33 9 31 Z" fill="none" stroke="#7a7a7a" stroke-width="1.6"/><path d="M24 2 V9 H31" fill="none" stroke="#7a7a7a" stroke-width="1.4"/><rect x="1" y="13" width="18" height="9" rx="1" fill="#cc2a20"/><text x="10" y="20.5" font-size="7.5" font-weight="700" fill="#fff" text-anchor="middle" font-family="Liberation Sans">PDF</text><path d="M22 14 H28 M22 18 H28 M22 22 H28" stroke="#cc2a20" stroke-width="1.6"/></svg>
<div style="position:absolute;left:2833.03px;top:496.50px;font-size:28.11px;line-height:28.11px;font-weight:400;color:#2a2a2a;white-space:nowrap;transform:scaleX(0.9837);transform-origin:0 0;">Invoice_drywal...</div>
<div style="position:absolute;left:2794.50px;top:596.50px;font-size:28.11px;line-height:28.11px;font-weight:400;color:#2a2a2a;white-space:nowrap;">-</div>
<svg style="position:absolute;left:2782px;top:695px;" width="38" height="30" viewBox="0 0 38 30"><path d="M2 5 L12 1.5 V26 L2 29 Z M14 1.5 L24 5 V29 L14 26 Z M26 5 L36 1.5 V26 L26 29 Z" fill="#262626" stroke="#262626" stroke-width="1.6" stroke-linejoin="round"/></svg>
<div style="position:absolute;left:2835.70px;top:696.50px;font-size:28.11px;line-height:28.11px;font-weight:400;color:#2a2a2a;white-space:nowrap;transform:scaleX(0.9507);transform-origin:0 0;">EN_Electrical_...</div>
<svg style="position:absolute;left:2784px;top:792px;" width="34" height="34" viewBox="0 0 34 34"><path d="M9 2 H24 L31 9 V31 Q31 33 29 33 H11 Q9 33 9 31 Z" fill="none" stroke="#7a7a7a" stroke-width="1.6"/><path d="M24 2 V9 H31" fill="none" stroke="#7a7a7a" stroke-width="1.4"/><rect x="1" y="13" width="18" height="9" rx="1" fill="#cc2a20"/><text x="10" y="20.5" font-size="7.5" font-weight="700" fill="#fff" text-anchor="middle" font-family="Liberation Sans">PDF</text><path d="M22 14 H28 M22 18 H28 M22 22 H28" stroke="#cc2a20" stroke-width="1.6"/></svg>
<div style="position:absolute;left:2835.60px;top:796.50px;font-size:28.11px;line-height:28.11px;font-weight:400;color:#2a2a2a;white-space:nowrap;transform:scaleX(0.9978);transform-origin:0 0;">Bill_of_quantiti...</div>
<div style="position:absolute;left:2794.50px;top:895.50px;font-size:28.11px;line-height:28.11px;font-weight:400;color:#2a2a2a;white-space:nowrap;">-</div>
<svg style="position:absolute;left:2779px;top:997px;" width="24" height="24" viewBox="0 0 24 24"><path d="M7 2 H17 L22 7 V21 Q22 22 21 22 H8 Q7 22 7 21 Z" fill="none" stroke="#7a7a7a" stroke-width="1.2"/><rect x="1" y="6.5" width="12" height="12" rx="1" fill="#2d5aa8"/><text x="7" y="16" font-size="9" font-weight="700" fill="#fff" text-anchor="middle" font-family="Liberation Serif">W</text><path d="M15 11 H20 M15 14 H20 M15 17 H20" stroke="#2d5aa8" stroke-width="1.2"/></svg>
<div style="position:absolute;left:2814.20px;top:995.50px;font-size:28.11px;line-height:28.11px;font-weight:400;color:#2a2a2a;white-space:nowrap;letter-spacing:0.098px;">Instructiona...</div>
<div style="position:absolute;left:3001.40px;top:995.50px;font-size:28.11px;line-height:28.11px;font-weight:700;color:#2170a8;white-space:nowrap;transform:scaleX(0.9962);transform-origin:0 0;">+1</div>
<svg style="position:absolute;left:2787px;top:1091px;" width="34" height="34" viewBox="0 0 34 34"><path d="M9 2 H24 L31 9 V31 Q31 33 29 33 H11 Q9 33 9 31 Z" fill="none" stroke="#7a7a7a" stroke-width="1.6"/><path d="M24 2 V9 H31" fill="none" stroke="#7a7a7a" stroke-width="1.4"/><rect x="1" y="13" width="18" height="9" rx="1" fill="#cc2a20"/><text x="10" y="20.5" font-size="7.5" font-weight="700" fill="#fff" text-anchor="middle" font-family="Liberation Sans">PDF</text><path d="M22 14 H28 M22 18 H28 M22 22 H28" stroke="#cc2a20" stroke-width="1.6"/></svg>
<div style="position:absolute;left:2840.90px;top:1095.50px;font-size:28.11px;line-height:28.11px;font-weight:400;color:#2a2a2a;white-space:nowrap;letter-spacing:0.008px;">Bill_of_quantiti...</div>
<svg style="position:absolute;left:2779px;top:1191px;" width="34" height="34" viewBox="0 0 34 34"><path d="M10 1 H25 L32 8 V31 Q32 33 30 33 H12 Q10 33 10 31 Z" fill="none" stroke="#7a7a7a" stroke-width="1.6"/><rect x="1" y="9" width="18" height="18" rx="1.5" fill="#2a7a48"/><text x="10" y="23.5" font-size="14" fill="#fff" text-anchor="middle" font-family="Liberation Sans">X</text><path d="M22 14 H29 M22 19 H29 M22 24 H29" stroke="#2a7a48" stroke-width="1.8"/></svg>
<div style="position:absolute;left:2826.42px;top:1195.50px;font-size:28.11px;line-height:28.11px;font-weight:400;color:#2a2a2a;white-space:nowrap;transform:scaleX(0.9786);transform-origin:0 0;">Construction_sc...</div>
<div style="position:absolute;left:3062px;top:479px;width:141px;height:60px;overflow:hidden;">
<div style="position:absolute;left:17.02px;top:17.50px;font-size:28.11px;line-height:28.11px;font-weight:400;color:#2a2a2a;white-space:nowrap;transform:scaleX(0.9895);transform-origin:0 0;">Robert Hammer</div>
</div>
<svg style="position:absolute;left:3256px;top:493px;" width="16" height="32" viewBox="0 0 16 32"><circle cx="8" cy="5.8" r="3.9" fill="#111"/><circle cx="8" cy="16" r="3.9" fill="#111"/><circle cx="8" cy="26.2" r="3.9" fill="#111"/></svg>
<div style="position:absolute;left:3062px;top:579px;width:141px;height:60px;overflow:hidden;">
<div style="position:absolute;left:17.02px;top:17.50px;font-size:28.11px;line-height:28.11px;font-weight:400;color:#2a2a2a;white-space:nowrap;transform:scaleX(0.9895);transform-origin:0 0;">Robert Hammer</div>
</div>
<svg style="position:absolute;left:3256px;top:593px;" width="16" height="32" viewBox="0 0 16 32"><circle cx="8" cy="5.8" r="3.9" fill="#111"/><circle cx="8" cy="16" r="3.9" fill="#111"/><circle cx="8" cy="26.2" r="3.9" fill="#111"/></svg>
<div style="position:absolute;left:3062px;top:679px;width:141px;height:60px;overflow:hidden;">
<div style="position:absolute;left:17.02px;top:17.50px;font-size:28.11px;line-height:28.11px;font-weight:400;color:#2a2a2a;white-space:nowrap;transform:scaleX(0.9895);transform-origin:0 0;">Robert Hammer</div>
</div>
<svg style="position:absolute;left:3256px;top:693px;" width="16" height="32" viewBox="0 0 16 32"><circle cx="8" cy="5.8" r="3.9" fill="#111"/><circle cx="8" cy="16" r="3.9" fill="#111"/><circle cx="8" cy="26.2" r="3.9" fill="#111"/></svg>
<div style="position:absolute;left:3062px;top:779px;width:141px;height:60px;overflow:hidden;">
<div style="position:absolute;left:17.02px;top:17.50px;font-size:28.11px;line-height:28.11px;font-weight:400;color:#2a2a2a;white-space:nowrap;transform:scaleX(0.9895);transform-origin:0 0;">Robert Hammer</div>
</div>
<svg style="position:absolute;left:3256px;top:793px;" width="16" height="32" viewBox="0 0 16 32"><circle cx="8" cy="5.8" r="3.9" fill="#111"/><circle cx="8" cy="16" r="3.9" fill="#111"/><circle cx="8" cy="26.2" r="3.9" fill="#111"/></svg>
<div style="position:absolute;left:3062px;top:878px;width:141px;height:60px;overflow:hidden;">
<div style="position:absolute;left:17.02px;top:17.50px;font-size:28.11px;line-height:28.11px;font-weight:400;color:#2a2a2a;white-space:nowrap;transform:scaleX(0.9895);transform-origin:0 0;">Robert Hammer</div>
</div>
<svg style="position:absolute;left:3256px;top:892px;" width="16" height="32" viewBox="0 0 16 32"><circle cx="8" cy="5.8" r="3.9" fill="#111"/><circle cx="8" cy="16" r="3.9" fill="#111"/><circle cx="8" cy="26.2" r="3.9" fill="#111"/></svg>
<div style="position:absolute;left:3062px;top:978px;width:141px;height:60px;overflow:hidden;">
<div style="position:absolute;left:17.02px;top:17.50px;font-size:28.11px;line-height:28.11px;font-weight:400;color:#2a2a2a;white-space:nowrap;transform:scaleX(0.9895);transform-origin:0 0;">Robert Hammer</div>
</div>
<svg style="position:absolute;left:3256px;top:992px;" width="16" height="32" viewBox="0 0 16 32"><circle cx="8" cy="5.8" r="3.9" fill="#111"/><circle cx="8" cy="16" r="3.9" fill="#111"/><circle cx="8" cy="26.2" r="3.9" fill="#111"/></svg>
<div style="position:absolute;left:3062px;top:1078px;width:141px;height:60px;overflow:hidden;">
<div style="position:absolute;left:17.02px;top:17.50px;font-size:28.11px;line-height:28.11px;font-weight:400;color:#2a2a2a;white-space:nowrap;transform:scaleX(0.9895);transform-origin:0 0;">Robert Hammer</div>
</div>
<svg style="position:absolute;left:3256px;top:1092px;" width="16" height="32" viewBox="0 0 16 32"><circle cx="8" cy="5.8" r="3.9" fill="#111"/><circle cx="8" cy="16" r="3.9" fill="#111"/><circle cx="8" cy="26.2" r="3.9" fill="#111"/></svg>
<div style="position:absolute;left:3062px;top:1178px;width:141px;height:60px;overflow:hidden;">
<div style="position:absolute;left:17.02px;top:17.50px;font-size:28.11px;line-height:28.11px;font-weight:400;color:#2a2a2a;white-space:nowrap;transform:scaleX(0.9895);transform-origin:0 0;">Robert Hammer</div>
</div>
<svg style="position:absolute;left:3256px;top:1192px;" width="16" height="32" viewBox="0 0 16 32"><circle cx="8" cy="5.8" r="3.9" fill="#111"/><circle cx="8" cy="16" r="3.9" fill="#111"/><circle cx="8" cy="26.2" r="3.9" fill="#111"/></svg>
<div style="position:absolute;left:1194px;top:547px;width:995px;height:527px;background:#fff;border:2px solid #e3201b;border-radius:9px;"></div>
<svg style="position:absolute;left:2118px;top:596px;" width="24" height="24" viewBox="0 0 24 24"><path d="M3 3 L21 21 M21 3 L3 21" stroke="#111" stroke-width="4.2" stroke-linecap="round"/></svg>
<div style="position:absolute;left:1246.19px;top:676.71px;font-size:36.96px;line-height:36.96px;font-weight:700;color:#0a0a0a;white-space:nowrap;transform:scaleX(0.9066);transform-origin:0 0;">Delete request</div>
<div style="position:absolute;left:1248.00px;top:753.20px;font-size:28.11px;line-height:28.11px;font-weight:400;color:#111;white-space:nowrap;transform:scaleX(0.9791);transform-origin:0 0;">Are you sure you want to delete this approval request? This action</div>
<div style="position:absolute;left:1247.02px;top:793.20px;font-size:28.11px;line-height:28.11px;font-weight:400;color:#111;white-space:nowrap;transform:scaleX(0.9810);transform-origin:0 0;">cannot be undone.</div>
<div style="position:absolute;left:1238px;top:845px;width:903px;height:123px;border:6px solid #ff8800;border-radius:10px;"></div>
<div style="position:absolute;left:1246.06px;top:861.20px;font-size:28.11px;line-height:28.11px;font-weight:700;color:#0a0a0a;white-space:nowrap;transform:scaleX(0.9383);transform-origin:0 0;">Please enter &quot;Delete&quot; to confirm</div>
<div style="position:absolute;left:1246px;top:903px;width:892px;height:60px;border:2px solid #b9c5d1;border-radius:4px;background:#fff;"></div>
<div style="position:absolute;left:1268.00px;top:922.70px;font-size:28.11px;line-height:28.11px;font-weight:400;color:#111;white-space:nowrap;letter-spacing:0.076px;">Delete</div>
<div style="position:absolute;left:1349px;top:916px;width:2px;height:38px;background:#111;"></div>
<div style="position:absolute;left:1376px;top:908px;width:56px;height:56px;border-radius:50%;background:#ff8800;"></div>
<div style="position:absolute;left:1394.00px;top:919.56px;font-size:31.23px;line-height:31.23px;font-weight:400;color:#1a1a1a;white-space:nowrap;">3</div>
<svg style="position:absolute;left:1340px;top:985px;" width="240" height="75" viewBox="0 0 240 75"><path d="M17.5 12.5 L186 43.5" stroke="#ff8800" stroke-width="11.5" stroke-linecap="butt"/><path d="M188 20 L220 46 L181 60 Z" fill="#ff8800" stroke="#ff8800" stroke-width="3" stroke-linejoin="round"/></svg>
<div style="position:absolute;left:1577px;top:997px;width:56px;height:56px;border-radius:50%;background:#ff8800;"></div>
<div style="position:absolute;left:1596.00px;top:1008.86px;font-size:31.23px;line-height:31.23px;font-weight:400;color:#1a1a1a;white-space:nowrap;">4</div>
<div style="position:absolute;left:1644px;top:985px;width:255px;height:73px;border:6px solid #ff8800;border-radius:9px;"></div>
<div style="position:absolute;left:1658px;top:997px;width:242px;height:60px;background:#e32119;border-radius:8px;"></div>
<div style="position:absolute;left:1688.02px;top:1014.80px;font-size:28.11px;line-height:28.11px;font-weight:400;color:#fff;white-space:nowrap;transform:scaleX(0.9905);transform-origin:0 0;">Delete request</div>
<div style="position:absolute;left:1920px;top:998px;width:236px;height:55px;border:2px solid #b9c5d1;border-radius:7px;background:#fff;"></div>
<div style="position:absolute;left:1998.86px;top:1014.80px;font-size:28.11px;line-height:28.11px;font-weight:400;color:#111;white-space:nowrap;transform:scaleX(0.9407);transform-origin:0 0;">Cancel</div>
</div></body></html>
